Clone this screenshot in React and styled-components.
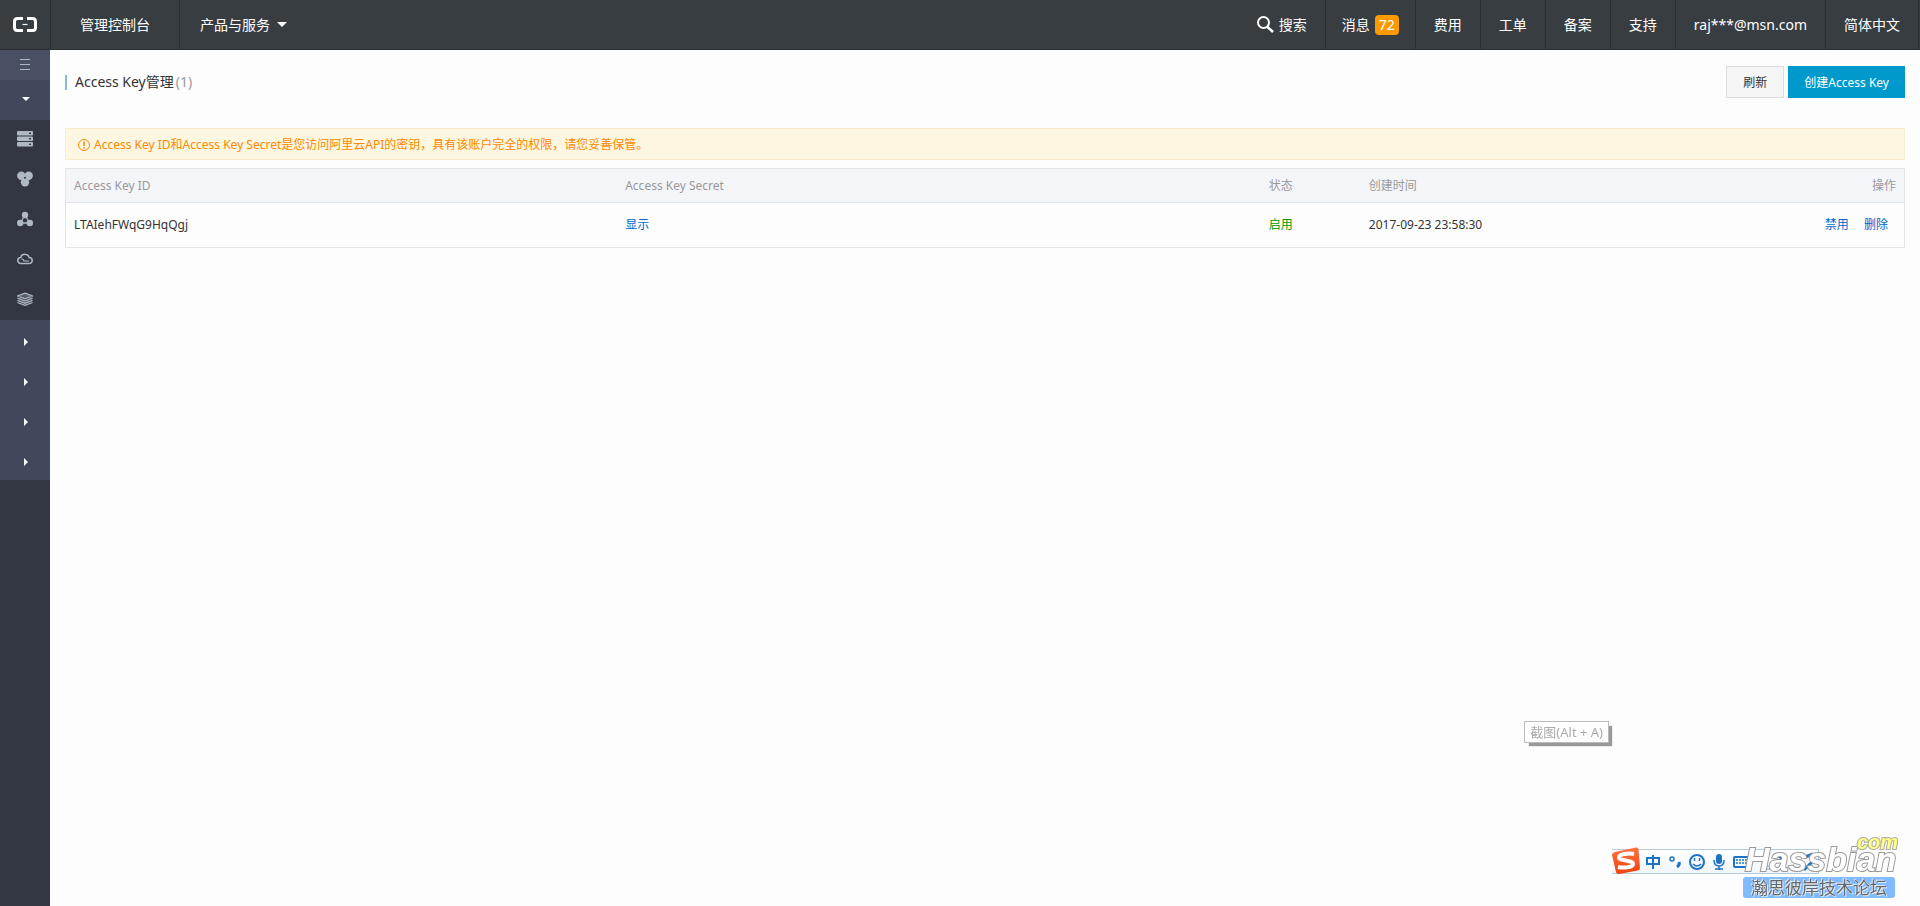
import React from "react";
import styled, { createGlobalStyle } from "styled-components";

const Global = createGlobalStyle`
  * { box-sizing: border-box; }
  html, body, #root { height: 100%; }
  body {
    margin: 0;
    background: #fdfdfd;
    color: #333;
    font: 12px/18px "Noto Sans", "Noto Sans CJK SC", sans-serif;
  }
  button { font: inherit; cursor: pointer; }
  a { text-decoration: none; }
`;

const Page = styled.div`
  display: flex;
  flex-direction: column;
  min-height: 100%;
`;

const TopBar = styled.header`
  display: flex;
  height: 50px;
  background: #373d41;
  border-bottom: 1px solid #2a2f32;
  font-size: 14px;
`;

const Logo = styled.a`
  display: flex;
  align-items: center;
  justify-content: center;
  width: 51px;
  border-right: 1px solid #2a2f32;
`;

const NavGroup = styled.nav`
  display: flex;
  margin-left: ${(p) => (p.$end ? "auto" : "0")};
  padding-right: ${(p) => (p.$end ? 1 : 0)}px;
`;

const NavItem = styled.a`
  display: flex;
  align-items: center;
  gap: 5px;
  padding: 0 ${(p) => p.$pad || 18}px;
  border-right: ${(p) => (p.$plain ? "0" : "1px solid #2a2f32")};
  color: #fff;
  white-space: nowrap;
`;

const Count = styled.span`
  padding: 0 4px;
  border-radius: 4px;
  background: #ff9900;
  line-height: 20px;
`;

const Caret = styled.span`
  width: 0;
  height: 0;
  margin-left: 2px;
  border: ${(p) => p.$size || 4}px solid transparent;
  ${(p) =>
    p.$right
      ? "border-left-color: #fff; border-right-width: 0;"
      : "border-top-color: #fff; border-bottom-width: 0;"}
`;

const Body = styled.div`
  display: flex;
  flex: 1;
`;

const Sidebar = styled.nav`
  display: flex;
  flex-direction: column;
  flex: none;
  width: 50px;
  background: #333744;
`;

const SideButton = styled.button`
  display: flex;
  align-items: center;
  justify-content: center;
  height: ${(p) => (p.$fold ? 30 : 40)}px;
  padding: ${(p) => (p.$closed ? "3px 0 0" : "0 0 2px")};
  border: 0;
  color: #aeb9c2;
  background: ${(p) => (p.$fold ? "#4a5064" : p.$group ? "#42485b" : "#333744")};
`;

const Main = styled.main`
  flex: 1;
  min-width: 0;
  padding: 16px 15px;
`;

const TitleRow = styled.div`
  display: flex;
  align-items: center;
  gap: 4px;
  margin-bottom: 30px;
`;

const Title = styled.h1`
  display: flex;
  align-items: center;
  gap: 2px;
  flex: 1;
  margin: 0;
  font-size: 14px;
  font-weight: 400;
  &::before {
    content: "";
    width: 2px;
    height: 15px;
    margin-right: 6px;
    background: #88b7e0;
  }
`;

const Total = styled.span`
  color: #999;
`;

const Action = styled.button`
  height: 32px;
  padding: 2px ${(p) => (p.$primary ? 15 : 16)}px 0;
  border: 1px solid ${(p) => (p.$primary ? "#0099cc" : "#ddd")};
  background: ${(p) => (p.$primary ? "#0099cc" : "#f5f5f6")};
  color: ${(p) => (p.$primary ? "#fff" : "#333")};
`;

const Alert = styled.div`
  display: flex;
  align-items: center;
  gap: 4px;
  height: 32px;
  margin-bottom: 8px;
  padding: 1px 12px 0;
  border: 1px solid #faebcc;
  background: #fcf8e3;
  background: #fdf6e1;
  color: #ff8800;
`;

const Table = styled.table`
  width: 100%;
  table-layout: fixed;
  border-collapse: collapse;
  border: 1px solid #e1e6eb;
`;

const Th = styled.th`
  width: ${(p) => p.$w || "auto"};
  height: 34px;
  padding: 0 8px;
  border-bottom: 1px solid #e1e6eb;
  background: #f4f5f9;
  color: #999;
  font-weight: 400;
  text-align: ${(p) => (p.$end ? "right" : "left")};
`;

const Td = styled.td`
  height: 45px;
  padding: 0 8px;
  color: ${(p) => (p.$ok ? "#009900" : "#333")};
  text-align: ${(p) => (p.$end ? "right" : "left")};
`;

const Link = styled.a`
  color: #0066cc;
  margin-right: ${(p) => p.$space || 0}px;
`;

const Tip = styled.div`
  position: fixed;
  right: 311px;
  bottom: 163px;
  padding: 0 5px;
  border: 1px solid #bbb;
  background: #fff;
  box-shadow: 4px 4px 1px -1px #999;
  color: #aaa;
  font-size: 13px;
  line-height: 20px;
`;

const ImeBar = styled.div`
  position: fixed;
  right: 101px;
  bottom: 32px;
  display: flex;
  align-items: center;
  width: 207px;
  height: 25px;
  border: 1px solid #b4cbe0;
  border-left: 0;
  background: linear-gradient(#fff, #f1f6fb);
`;

const Watermark = styled.div`
  position: fixed;
  right: 20px;
  bottom: 8px;
  width: 160px;
  svg { display: block; }
`;

const Forum = styled.div`
  width: 152px;
  margin-left: 3px;
  border-radius: 3px;
  background: #80baff;
  color: #666;
  font-size: 17px;
  line-height: 21px;
  text-align: center;
  text-shadow: 0 0 1px #fff, 1px 1px 0 #d8e8fa, -1px -1px 0 #d8e8fa;
`;

const ServerIcon = () => (
  <svg width="16" height="16" viewBox="0 0 16 16">
    {[0, 5.5, 11].map((y) => (
      <g key={y}>
        <rect y={y} width="16" height="4.6" rx="1" fill="currentColor" />
        <rect x="12" y={y + 1.6} width="2" height="1.4" fill="#333744" />
      </g>
    ))}
  </svg>
);

const ClusterIcon = () => (
  <svg width="16" height="16" viewBox="0 0 16 16" fill="currentColor">
    <circle cx="4.3" cy="4.8" r="4.2" />
    <circle cx="11.7" cy="4.8" r="4.2" />
    <circle cx="8" cy="11.3" r="4.2" />
    <circle cx="8" cy="6.8" r="1" fill="#333744" />
  </svg>
);

const NodesIcon = () => (
  <svg width="16" height="16" viewBox="0 0 16 16" fill="currentColor">
    <path d="M8 4L3.3 12H12.7Z" fill="none" stroke="currentColor" strokeWidth="1.3" />
    <circle cx="8" cy="4" r="3.2" />
    <circle cx="3.2" cy="12" r="3.2" />
    <circle cx="12.8" cy="12" r="3.2" />
  </svg>
);

const CloudIcon = () => (
  <svg width="16" height="16" viewBox="0 0 16 16" fill="none" stroke="currentColor" strokeWidth="1.5">
    <path d="M3.800 12.500a3 3 0 0 1 0-6C4.500 2 11 2 12.200 6.500a3 3 0 0 1 0 6Z" />
    <path d="M4.500 8q2 0 2.500 2h5" strokeWidth="1.200" />
  </svg>
);

const LayersIcon = () => (
  <svg width="16" height="16" viewBox="0 0 16 16" fill="none" stroke="currentColor" strokeWidth="1.3">
    <path d="M8 2.200L15.500 5 8 7.800.500 5Z" fill="currentColor" fillOpacity=".3" />
    <path d="M.500 7.200L8 10l7.500-2.800M.500 9.400L8 12.200l7.500-2.800M.500 11.500L8 14.300l7.500-2.800" />
  </svg>
);

const FoldIcon = () => (
  <svg width="10" height="11" viewBox="0 0 10 11" stroke="currentColor">
    <path d="M0 .5h10M0 5.500h10M0 10.500h10" />
  </svg>
);

const ImeIcons = () => (
  <svg width="207" height="32" viewBox="0 0 207 32" overflow="visible" fill="none" stroke="#1b74c5" strokeWidth="2">
    <defs>
      <linearGradient id="sogou" x2="0" y2="1">
        <stop offset="0" stopColor="#ff7340" />
        <stop offset="1" stopColor="#ee4410" />
      </linearGradient>
    </defs>
    <path d="M3 6L24 1.500Q26 1 26.500 3L28 22Q28 24 26 24.500L7 28Q4.500 28.500 4 26L0 9Q0 7 3 6Z" fill="url(#sogou)" stroke="none" />
    <path d="M22 8C17 7 7 8 7 11.500S21 14 21 18 10 22 6 21" stroke="#fff" strokeWidth="4" />
    <path d="M35 12h12v6H35ZM41 9v14" />
    <circle cx="60" cy="13" r="2" strokeWidth="1.500" />
    <path d="M67 16q1 3-2 5" strokeWidth="3" />
    <circle cx="85" cy="16" r="7" />
    <path d="M82.500 12v3M87.500 12v3M81 18q4 4 8 0" strokeWidth="1.500" />
    <rect x="104" y="8" width="6" height="10" rx="3" fill="#1b74c5" stroke="none" />
    <path d="M102 14q0 6 5 6t5-6M107 20v4M103 23h8" strokeWidth="1.500" />
    <rect x="122" y="11" width="15" height="10" rx="1" />
    <path d="M124 14h12M124 17h12" strokeWidth="1.500" strokeDasharray="2 1" />
    <path d="M149 20h10M149 23h10M154 11v7" stroke="#b8d4ee" />
    <path d="M166 11l4-2 4 2v11h-6V13" fill="#1b74c5" stroke="none" />
    <path d="M193 23l10-10M189 18l5 6M193 11l8-3" strokeWidth="3" />
  </svg>
);

const links = ["费用", "工单", "备案", "支持", "raj***@msn.com", "简体中文"];
const services = [
  ["云服务器", ServerIcon],
  ["负载均衡", ClusterIcon],
  ["专有网络", NodesIcon],
  ["云盾", CloudIcon],
  ["存储", LayersIcon],
];

export default function App() {
  return (
    <Page>
      <Global />
      <TopBar>
        <Logo href="#" aria-label="首页">
          <svg width="24" height="15" viewBox="0 0 24 15" fill="none" stroke="#fff">
            <path d="M10 1.500H4.500Q1.500 1.500 1.500 4.500V10.500Q1.500 13.500 4.500 13.500H10M14 1.500h5.500Q22.500 1.500 22.500 4.500V10.500Q22.500 13.500 19.500 13.500H14" strokeWidth="3" />
            <path d="M9.500 7.500h5" strokeWidth="1.200" />
          </svg>
        </Logo>
        <NavGroup>
          <NavItem href="#" $pad={29}>管理控制台</NavItem>
          <NavItem href="#" $pad={20} $plain>产品与服务<Caret $size={5} /></NavItem>
        </NavGroup>
        <NavGroup $end>
          <NavItem href="#">
            <svg width="17" height="17" viewBox="0 0 17 17" fill="none" stroke="#fff" strokeWidth="2">
              <circle cx="6.500" cy="6.500" r="5.500" />
              <path d="M10 10.500l6 5.500" strokeWidth="2.500" />
            </svg>
            搜索
          </NavItem>
          <NavItem href="#" $pad={16}>消息<Count>72</Count></NavItem>
          {links.map((t) => <NavItem href="#" key={t}>{t}</NavItem>)}
        </NavGroup>
      </TopBar>
      <Body>
        <Sidebar>
          <SideButton $fold aria-label="收起"><FoldIcon /></SideButton>
          <SideButton $group aria-label="产品与服务"><Caret /></SideButton>
          {services.map(([name, Icon]) => (
            <SideButton key={name} aria-label={name}><Icon /></SideButton>
          ))}
          {["用户中心", "安全", "数据", "应用"].map((n) => (
            <SideButton $group $closed key={n} aria-label={n}><Caret $right /></SideButton>
          ))}
        </Sidebar>
        <Main>
          <TitleRow>
            <Title>Access Key管理<Total>(1)</Total></Title>
            <Action>刷新</Action>
            <Action $primary>创建Access Key</Action>
          </TitleRow>
          <Alert role="alert">
            <svg width="12" height="12" viewBox="0 0 12 12" fill="none" stroke="currentColor">
              <circle cx="6" cy="6" r="5.500" />
              <path d="M6 2.500v4.500M6 8v1.500" strokeWidth="1.500" />
            </svg>
            Access Key ID和Access Key Secret是您访问阿里云API的密钥，具有该账户完全的权限，请您妥善保管。
          </Alert>
          <Table>
            <thead>
              <tr>
                <Th $w="30%">Access Key ID</Th>
                <Th $w="35%">Access Key Secret</Th>
                <Th $w="100px">状态</Th>
                <Th>创建时间</Th>
                <Th $end>操作</Th>
              </tr>
            </thead>
            <tbody>
              <tr>
                <Td>LTAIehFWqG9HqQgj</Td>
                <Td><Link href="#">显示</Link></Td>
                <Td $ok>启用</Td>
                <Td>2017-09-23 23:58:30</Td>
                <Td $end>
                  <Link href="#" $space={12}>禁用</Link>{" "}
                  <Link href="#" $space={8}>删除</Link>
                </Td>
              </tr>
            </tbody>
          </Table>
        </Main>
      </Body>
      <Tip role="tooltip">截图(Alt + A)</Tip>
      <ImeBar><ImeIcons /></ImeBar>
      <Watermark>
        <svg width="160" height="50" viewBox="0 0 160 50" fontFamily="Liberation Sans, sans-serif" fontStyle="italic" fontWeight="700" paintOrder="stroke">
          <text x="5" y="44" fontSize="34" fill="#fff" stroke="#999" strokeWidth="2">Hassbian</text>
          <text x="117" y="22" fontSize="20" fill="#ffff80" stroke="#aaa" strokeWidth="2">com</text>
        </svg>
        <Forum>瀚思彼岸技术论坛</Forum>
      </Watermark>
    </Page>
  );
}
